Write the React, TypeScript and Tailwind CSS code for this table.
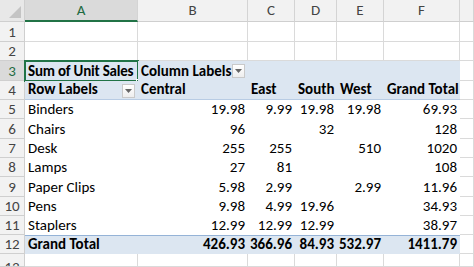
import React from "react";

const W = [
  "w-[25px]",
  "w-[113px]",
  "w-[110px]",
  "w-[47px]",
  "w-[42px]",
  "w-[47px]",
  "w-[76px]",
  "w-[14px]",
];
const LETTERS = ["A", "B", "C", "D", "E", "F", ""];
const H = [
  "h-[20px]",
  "h-[19px]",
  "h-[20px]",
  "h-[19px]",
  "h-[19px]",
  "h-[20px]",
  "h-[19px]",
  "h-[19px]",
  "h-[20px]",
  "h-[19px]",
  "h-[19px]",
  "h-[19px]",
  "h-[13px]",
];

type Cell = { t?: string; bold?: boolean; right?: boolean };

const data: { label: string; v: string[] }[] = [
  { label: "Binders", v: ["19.98", "9.99", "19.98", "19.98", "69.93"] },
  { label: "Chairs", v: ["96", "", "32", "", "128"] },
  { label: "Desk", v: ["255", "255", "", "510", "1020"] },
  { label: "Lamps", v: ["27", "81", "", "", "108"] },
  { label: "Paper Clips", v: ["5.98", "2.99", "", "2.99", "11.96"] },
  { label: "Pens", v: ["9.98", "4.99", "19.96", "", "34.93"] },
  { label: "Staplers", v: ["12.99", "12.99", "12.99", "", "38.97"] },
];

function Dropdown() {
  return (
    <span className="absolute right-[3px] top-[3px] flex h-[14px] w-[13px] items-center justify-center border border-[#c9c9c9] bg-gradient-to-b from-[#ffffff] to-[#eeeeee]">
      <svg width="7" height="4" viewBox="0 0 7 4">
        <path d="M0 0 H7 L3.5 4 Z" fill="#666" />
      </svg>
    </span>
  );
}

function cellsFor(r: number): Cell[] {
  if (r === 3)
    return [{ t: "Sum of Unit Sales", bold: true }, { t: "Column Labels", bold: true }, {}, {}, {}, {}];
  if (r === 4)
    return [
      { t: "Row Labels", bold: true },
      { t: "Central", bold: true },
      { t: "East", bold: true },
      { t: "South", bold: true },
      { t: "West", bold: true },
      { t: "Grand Total", bold: true },
    ];
  if (r >= 5 && r <= 11) {
    const d = data[r - 5];
    return [{ t: d.label }, ...d.v.map((x) => ({ t: x, right: true }))];
  }
  if (r === 12)
    return [
      { t: "Grand Total", bold: true },
      { t: "426.93", bold: true, right: true },
      { t: "366.96", bold: true, right: true },
      { t: "84.93", bold: true, right: true },
      { t: "532.97", bold: true, right: true },
      { t: "1411.79", bold: true, right: true },
    ];
  return [{}, {}, {}, {}, {}, {}];
}

export default function App() {
  const rows: React.ReactNode[] = [];

  rows.push(
    <div key="hdr" className="flex h-[22px]">
      <div className={"relative h-full shrink-0 border-r border-b border-[#cfcfcf] bg-[#e8e8e8] " + W[0]}>
        <svg className="absolute right-[3px] bottom-[3px]" width="12" height="12" viewBox="0 0 12 12">
          <path d="M12 0 V12 H0 Z" fill="#c4c4c4" />
        </svg>
      </div>
      {LETTERS.map((l, i) => (
        <div
          key={i}
          className={
            "flex h-full shrink-0 items-center justify-center border-r border-[#d4d4d4] text-[15px] " +
            W[i + 1] +
            " " +
            (i === 0
              ? "border-b-2 border-b-[#217346] bg-[#dadada] text-[#1f6b43]"
              : "border-b border-b-[#cfcfcf] bg-[#f2f2f2] text-[#444]")
          }
        >
          {l}
        </div>
      ))}
    </div>
  );

  for (let r = 1; r <= 13; r++) {
    const cells = cellsFor(r);
    const pivot = r >= 3 && r <= 12;
    const blue = r === 3 || r === 4 || r === 12;
    const rowSel = r === 3;
    const last = r === 13;

    rows.push(
      <div key={r} className={"flex " + H[r - 1]}>
        <div
          className={
            "flex h-full shrink-0 justify-center overflow-hidden border-r border-b border-[#cfcfcf] text-[15px] leading-[18px] " +
            W[0] +
            " " +
            (last ? "items-start pt-[4px] " : "items-center ") +
            (rowSel ? "bg-[#dadada] text-[#1f6b43]" : "bg-[#f2f2f2] text-[#444]")
          }
        >
          {r}
        </div>
        {cells.map((c, i) => {
          let cls =
            "relative flex h-full shrink-0 items-end whitespace-nowrap px-[3px] pb-[1px] text-[15px] leading-[18px] text-black " +
            W[i + 1] +
            " ";
          if (pivot) {
            cls += blue ? "bg-[#dce6f1] " : "bg-white ";
            if (r === 4) cls += "border-b border-b-[#b8cce4] ";
            if (r === 12) cls += "border-t border-t-[#95b3d7] ";
          } else {
            cls += "bg-white border-r border-b border-[#dadada] ";
          }
          if (c.right) cls += "justify-end ";
          if (c.bold) cls += "font-bold ";
          if (r === 3 && i === 0) cls += "tracking-[-0.2px] ";
          return (
            <div key={i} className={cls}>
              {c.t}
              {r === 3 && i === 1 && <Dropdown />}
              {r === 4 && i === 0 && <Dropdown />}
              {r === 3 && i === 0 && (
                <>
                  <span className="pointer-events-none absolute -left-[1px] -top-[1px] -right-[1px] -bottom-[1px] border-2 border-[#217346]" />
                  <span className="absolute -right-[3px] -bottom-[3px] h-[5px] w-[5px] border border-white bg-[#217346]" />
                </>
              )}
            </div>
          );
        })}
        <div className={"h-full shrink-0 border-r border-b border-[#dadada] bg-white " + W[7]} />
      </div>
    );
  }

  return (
    <div className="h-[267px] w-[474px] overflow-hidden bg-white font-[Carlito,Lato,sans-serif]">
      {rows}
    </div>
  );
}
